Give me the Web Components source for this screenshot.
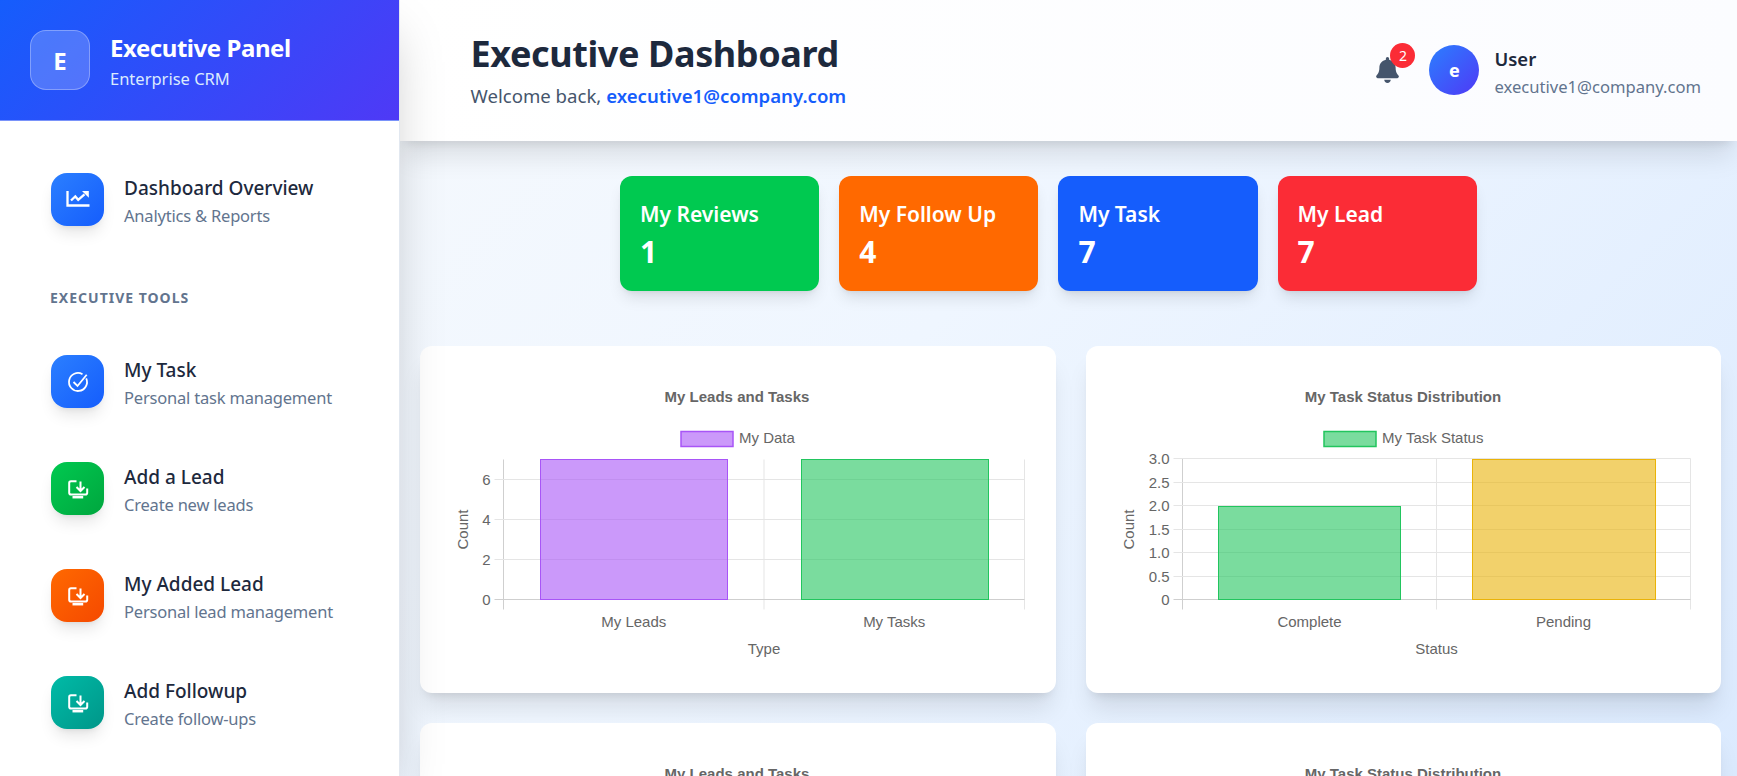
<!doctype html>
<html lang="en">
<head>
<meta charset="utf-8">
<title>Executive Dashboard</title>
<style>
  html, body { margin: 0; height: 100%; overflow: hidden; }
  body { font-family: "Noto Sans", "Open Sans", sans-serif; }
</style>
</head>
<body>
<app-shell>
  <side-bar slot="side">
    <nav-item tone="blue" icon="chart" name="Dashboard Overview" sub="Analytics &amp; Reports"></nav-item>
    <div slot="tools-label">EXECUTIVE TOOLS</div>
    <nav-item slot="tools" tone="blue" icon="check" name="My Task" sub="Personal task management"></nav-item>
    <nav-item slot="tools" tone="green" icon="inbox" name="Add a Lead" sub="Create new leads"></nav-item>
    <nav-item slot="tools" tone="orange" icon="inbox" name="My Added Lead" sub="Personal lead management"></nav-item>
    <nav-item slot="tools" tone="teal" icon="inbox" name="Add Followup" sub="Create follow-ups"></nav-item>
  </side-bar>
  <top-bar slot="head"></top-bar>
  <stat-row>
    <stat-card color="#00c950" label="My Reviews" value="1"></stat-card>
    <stat-card color="#ff6900" label="My Follow Up" value="4"></stat-card>
    <stat-card color="#155dfc" label="My Task" value="7"></stat-card>
    <stat-card color="#fb2c36" label="My Lead" value="7"></stat-card>
  </stat-row>
  <chart-grid>
    <bar-chart kind="leads"></bar-chart>
    <bar-chart kind="status"></bar-chart>
    <!-- second row sits below the fold, only the titles reach the window -->
    <bar-chart kind="leads" fold></bar-chart>
    <bar-chart kind="status" fold></bar-chart>
  </chart-grid>
</app-shell>

<script>
class AppShell extends HTMLElement {
  constructor() {
    super();
    this.attachShadow({ mode: 'open' });
    this.shadowRoot.innerHTML = `
      <style>
        :host { display: flex; height: 776px; overflow: hidden; background: linear-gradient(135deg, #f8fafc 0%, #eff6ff 50%, #dbeafe 100%); }
        .side { flex: 0 0 400px; position: relative; z-index: 3; }
        .main { flex: 1; min-width: 0; display: flex; flex-direction: column; }
        .head { position: relative; z-index: 2; }
        .body { padding: 35px 16px 0 20px; }
      </style>
      <div class="side"><slot name="side"></slot></div>
      <div class="main">
        <div class="head"><slot name="head"></slot></div>
        <div class="body"><slot></slot></div>
      </div>`;
  }
}

class SideBar extends HTMLElement {
  constructor() {
    super();
    this.attachShadow({ mode: 'open' });
    this.shadowRoot.innerHTML = `
      <style>
        :host {
          display: block; height: 776px; background: #fff; box-sizing: border-box;
          border-right: 1px solid #e2e8f0;
          box-shadow: 0 25px 50px -12px rgba(0,0,0,.25);
        }
        .top {
          height: 120px; box-sizing: content-box; display: flex; align-items: center; gap: 20px; padding-left: 30px;
          background: linear-gradient(135deg, #155dfc, #4f39f6);
          border-bottom: 1px solid #7a93fa;
        }
        .logo {
          width: 60px; height: 60px; box-sizing: border-box; border-radius: 16px;
          display: flex; align-items: center; justify-content: center;
          background: rgba(255,255,255,.2); border: 1px solid rgba(255,255,255,.3);
          color: #fff; font-weight: 700; font-size: 24px;
        }
        .titles { padding-top: 4px; }
        .brand { font-size: 24px; line-height: 32px; font-weight: 700; color: #fff; letter-spacing: -.45px; }
        .tag { margin-top: 2px; font-size: 16.5px; line-height: 26px; color: #dbeafe; }
        nav { padding: 52px 0 0 51px; }
        .label { margin: 62px 0 0 -1px; font-size: 14px; line-height: 20px; font-weight: 700; color: #62748e; letter-spacing: 1px; }
        .tools { margin-top: 47px; display: flex; flex-direction: column; gap: 54px; }
      </style>
      <div class="top">
        <div class="logo">E</div>
        <div class="titles">
          <div class="brand">Executive Panel</div>
          <div class="tag">Enterprise CRM</div>
        </div>
      </div>
      <nav>
        <slot></slot>
        <div class="label"><slot name="tools-label"></slot></div>
        <div class="tools"><slot name="tools"></slot></div>
      </nav>`;
  }
}

const NAV_ICONS = {
  chart: `<g stroke-width="2.300"><path d="M1.500 3v14.500H23.500"/><path d="M5 12.500l4.300-4 2.900 3.300 6.300-5.500"/></g><path d="M16 3h6.800v6.800z" fill="#fff" stroke="none"/>`,
  check: `<path d="M20.200 8.300A9 9 0 1 1 16.500 4.200" stroke-width="1.800"/><path d="M7.500 12l4 4L20.700 4.700" stroke-width="1.800"/>`,
  inbox: `<path d="M10.500 4.200H5A1.800 1.800 0 0 0 3.200 6v9.700A1.800 1.800 0 0 0 5 17.500h14.400a1.800 1.800 0 0 0 1.800-1.800V11.500"/><path d="M14.500 4.500v9.500M10.500 10l4 4 4-4"/><path d="M6.500 20.200h10.700" stroke-width="2.500"/>`
};
const NAV_TONES = {
  blue: ['#2b7fff', '#155dfc'],
  green: ['#00c950', '#00a63e'],
  orange: ['#ff6900', '#f54900'],
  teal: ['#00bba7', '#009689']
};

class NavItem extends HTMLElement {
  connectedCallback() {
    const tone = NAV_TONES[this.getAttribute('tone')];
    const icon = NAV_ICONS[this.getAttribute('icon')];
    const root = this.shadowRoot || this.attachShadow({ mode: 'open' });
    root.innerHTML = `
      <style>
        :host { display: flex; align-items: center; gap: 20px; height: 53px; }
        .ico {
          flex: 0 0 53px; height: 53px; border-radius: 16px;
          display: flex; align-items: center; justify-content: center;
          background: linear-gradient(135deg, ${tone[0]}, ${tone[1]});
          box-shadow: 0 10px 15px -3px rgba(0,0,0,.1), 0 4px 6px -4px rgba(0,0,0,.1);
        }
        svg { width: 24px; height: 24px; fill: none; stroke: #fff; stroke-width: 2; }
        .text { padding-top: 3px; }
        .name { font-size: 19px; line-height: 30px; font-weight: 500; color: #1d293d; white-space: nowrap; }
        .sub { font-size: 16.5px; line-height: 26px; color: #62748e; letter-spacing: -.2px; white-space: nowrap; }
      </style>
      <div class="ico"><svg viewBox="0 0 24 24">${icon}</svg></div>
      <div class="text">
        <div class="name">${this.getAttribute('name')}</div>
        <div class="sub">${this.getAttribute('sub').replace('&', '&amp;')}</div>
      </div>`;
  }
}

class TopBar extends HTMLElement {
  constructor() {
    super();
    this.attachShadow({ mode: 'open' });
    this.shadowRoot.innerHTML = `
      <style>
        :host {
          display: flex; align-items: center; justify-content: space-between;
          height: 141px; padding: 2px 36px 0 70.5px; box-sizing: border-box;
          background: linear-gradient(90deg, #fff, #fbfcff);
          box-shadow: 0 20px 25px -5px rgba(0,0,0,.1), 0 8px 10px -6px rgba(0,0,0,.1);
        }
        h1 { margin: 0; font-size: 36px; line-height: 40px; font-weight: 700; color: #1d293d; letter-spacing: -.4px; }
        .hello { margin-top: 8px; font-size: 18.6px; line-height: 28px; color: #45556c; }
        .hello b { font-weight: 600; color: #155dfc; }
        .right { display: flex; align-items: center; margin-top: -3px; }
        .bell { position: relative; width: 23px; height: 26px; margin: 0 30px 0 0; }
        .bell svg { display: block; width: 23px; height: 26px; fill: #45556c; }
        .badge {
          position: absolute; left: 14px; top: -14px; width: 25px; height: 25px; border-radius: 50%;
          background: #fb2c36; color: #fff; font-size: 14px; line-height: 25px; text-align: center;
        }
        .avatar {
          width: 50px; height: 50px; border-radius: 50%; margin-right: 15px;
          background: linear-gradient(135deg, #2b7fff, #4f39f6); color: #fff;
          display: flex; align-items: center; justify-content: center; font-weight: 700; font-size: 18px;
        }
        .who { padding-top: 4px; }
        .user { font-size: 18.5px; line-height: 30px; font-weight: 600; color: #1d293d; }
        .mail { font-size: 16.6px; line-height: 26px; color: #62748e; }
      </style>
      <div>
        <h1>Executive Dashboard</h1>
        <div class="hello">Welcome back, <b>executive1@company.com</b></div>
      </div>
      <div class="right">
        <div class="bell">
          <svg viewBox="0 0 448 512"><path d="M224 512c35.32 0 63.97-28.65 63.97-64H160.03c0 35.35 28.65 64 63.97 64zm215.39-149.71c-19.32-20.76-55.47-51.99-55.47-154.29 0-77.7-54.48-139.9-127.94-155.16V32c0-17.67-14.32-32-31.98-32s-31.98 14.33-31.98 32v20.84C118.56 68.1 64.08 130.3 64.08 208c0 102.3-36.15 133.53-55.47 154.29-6 6.45-8.66 14.16-8.61 21.71.11 16.4 12.98 32 32.1 32h383.8c19.12 0 32-15.6 32.1-32 .05-7.55-2.61-15.27-8.61-21.71z"/></svg>
          <span class="badge">2</span>
        </div>
        <div class="avatar">e</div>
        <div class="who">
          <div class="user">User</div>
          <div class="mail">executive1@company.com</div>
        </div>
      </div>`;
  }
}

class StatRow extends HTMLElement {
  constructor() {
    super();
    this.attachShadow({ mode: 'open' });
    this.shadowRoot.innerHTML = `
      <style>:host { display: flex; gap: 20px; padding-left: 200px; }</style>
      <slot></slot>`;
  }
}

class StatCard extends HTMLElement {
  connectedCallback() {
    const root = this.shadowRoot || this.attachShadow({ mode: 'open' });
    root.innerHTML = `
      <style>
        :host {
          display: block; width: 199.2px; height: 115px; box-sizing: border-box; padding: 24px 20px 0;
          border-radius: 12px; color: #fff; background: ${this.getAttribute('color')};
          box-shadow: 0 10px 15px -3px rgba(0,0,0,.1), 0 4px 6px -4px rgba(0,0,0,.1);
        }
        .l { font-size: 21px; line-height: 28px; font-weight: 600; white-space: nowrap; }
        .v { margin-top: 6px; font-size: 30px; line-height: 36px; font-weight: 700; }
      </style>
      <div class="l">${this.getAttribute('label')}</div>
      <div class="v">${this.getAttribute('value')}</div>`;
  }
}

class ChartGrid extends HTMLElement {
  constructor() {
    super();
    this.attachShadow({ mode: 'open' });
    this.shadowRoot.innerHTML = `
      <style>:host { display: grid; grid-template-columns: 1fr 1fr; gap: 30px; margin-top: 55px; }</style>
      <slot></slot>`;
  }
}

const CHARTS = {
  leads: {
    title: 'My Leads and Tasks', titleX: 317, legend: 'My Data', swatchX: 261, swatchW: 52,
    swatchFill: 'rgba(168,85,247,.6)', swatchLine: '#a855f7',
    xLabel: 'Type', countX: 43,
    left: 83.5, right: 604.5, top: 113.5, bottom: 253.5,
    ticks: [['6', 133.5], ['4', 173.5], ['2', 213.5], ['0', 253.5]],
    cats: ['My Leads', 'My Tasks'],
    bars: [
      { x: 120.5, w: 187, y: 113.5, fill: 'rgba(168,85,247,.6)', line: '#a855f7' },
      { x: 381.5, w: 187, y: 113.5, fill: 'rgba(34,197,94,.6)', line: '#22c55e' }
    ]
  },
  status: {
    title: 'My Task Status Distribution', titleX: 317, legend: 'My Task Status', swatchX: 238, swatchW: 52,
    swatchFill: 'rgba(34,197,94,.6)', swatchLine: '#22c55e',
    xLabel: 'Status', countX: 43,
    left: 96.5, right: 604.5, top: 112.5, bottom: 253.5,
    ticks: [['3.0', 112.5], ['2.5', 136.5], ['2.0', 159.5], ['1.5', 183.5], ['1.0', 206.5], ['0.5', 230.5], ['0', 253.5]],
    cats: ['Complete', 'Pending'],
    bars: [
      { x: 132.5, w: 182, y: 160.5, fill: 'rgba(34,197,94,.6)', line: '#22c55e' },
      { x: 386.5, w: 183, y: 113.5, fill: 'rgba(234,179,8,.6)', line: '#eab308' }
    ]
  }
};

class BarChart extends HTMLElement {
  connectedCallback() {
    const c = CHARTS[this.getAttribute('kind')];
    const root = this.shadowRoot || this.attachShadow({ mode: 'open' });
    let body = '';
    if (!this.hasAttribute('fold')) {
      const mid = (c.left + c.right) / 2;
      const grid = '#e5e5e5';
      const edge = '#cfcfcf';
      let g = '';
      for (const x of [c.left, mid, c.right]) {
        g += `<line x1="${x}" x2="${x}" y1="${c.top}" y2="${c.bottom + 10}" stroke="${x === c.left ? edge : grid}"/>`;
      }
      for (const [label, y] of c.ticks) {
        const isZero = label === '0';
        g += `<line x1="${c.left - 9}" x2="${c.right}" y1="${y}" y2="${y}" stroke="${isZero ? edge : grid}"/>`;
        g += `<text x="${c.left - 13}" y="${y + 5}" text-anchor="end" font-size="15">${label}</text>`;
      }
      for (const b of c.bars) {
        g += `<rect x="${b.x}" y="${b.y}" width="${b.w}" height="${c.bottom - b.y}" fill="${b.fill}" stroke="${b.line}"/>`;
      }
      const colW = (c.right - c.left) / 2;
      c.cats.forEach((cat, i) => {
        g += `<text x="${c.left + colW * (i + .5)}" y="281" text-anchor="middle" font-size="15">${cat}</text>`;
      });
      body = `
        <rect x="${c.swatchX}" y="85.5" width="${c.swatchW}" height="15" fill="${c.swatchFill}" stroke="${c.swatchLine}" stroke-width="1.5"/>
        <text x="${c.swatchX + c.swatchW + 6}" y="97" font-size="15">${c.legend}</text>
        ${g}
        <text x="${mid}" y="308" text-anchor="middle" font-size="15">${c.xLabel}</text>
        <text transform="translate(${c.countX + 5} 183.5) rotate(-90)" text-anchor="middle" font-size="15">Count</text>`;
    }
    root.innerHTML = `
      <style>
        :host {
          display: block; height: 347px; background: #fff; border-radius: 12px;
          box-shadow: 0 20px 25px -5px rgba(0,0,0,.1), 0 8px 10px -6px rgba(0,0,0,.1);
        }
        svg { display: block; width: 100%; height: 347px; font-family: "Liberation Sans", Arial, sans-serif; fill: #666; }
      </style>
      <svg viewBox="0 0 635.5 347">
        <text x="${c.titleX}" y="56" text-anchor="middle" font-size="15" font-weight="700">${c.title}</text>
        ${body}
      </svg>`;
  }
}

customElements.define('app-shell', AppShell);
customElements.define('side-bar', SideBar);
customElements.define('nav-item', NavItem);
customElements.define('top-bar', TopBar);
customElements.define('stat-row', StatRow);
customElements.define('stat-card', StatCard);
customElements.define('chart-grid', ChartGrid);
customElements.define('bar-chart', BarChart);
</script>
</body>
</html>
